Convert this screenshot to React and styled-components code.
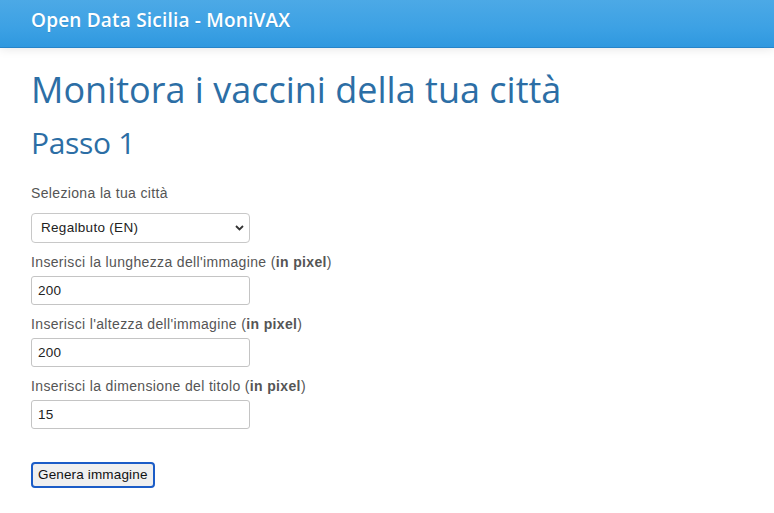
import React from 'react';
import styled, {createGlobalStyle} from 'styled-components';

const GlobalStyle = createGlobalStyle`
    html, body {
        margin: 0;
        padding: 0;
        background: #fff;
    }
    body {
        font-family: 'Liberation Sans', Arial, sans-serif;
        font-size: 14px;
        line-height: 20px;
        letter-spacing: 0.35px;
        color: #555;
    }
`

const Navbar = styled.header`
    height: 47px;
    background-image: linear-gradient(#4ca9e6, #3ca1e4 60%, #2f98df);
    border-bottom: 1px solid #2684c9;
    box-shadow: 0 1px 10px rgba(0,0,0,0.1);
    display: flex;
    align-items: center;
    padding: 0 31px;
`
const Brand = styled.span`
    font-family: 'Open Sans', sans-serif;
    font-size: 19px;
    font-weight: 600;
    letter-spacing: 0.2px;
    color: #fff;
    text-shadow: 0 1px 0 rgba(0,0,0,0.1);
    margin-top: -8px;
`

const Container = styled.main`
    padding: 0 31px;
`

const Title = styled.h1`
    font-family: 'Open Sans', sans-serif;
    font-weight: 400;
    font-size: 36px;
    line-height: 39.6px;
    letter-spacing: 0;
    color: #2c6ea5;
    margin: 22px 0 16px;
`
const Step = styled.h2`
    font-family: 'Open Sans', sans-serif;
    font-weight: 400;
    font-size: 30px;
    line-height: 33px;
    letter-spacing: -0.3px;
    color: #2c6ea5;
    margin: 0 0 24px;
`

const Intro = styled.p`
    margin: 0 0 10px;
`

const Label = styled.label`
    display: block;
    margin-bottom: 4px;
`

const SelectWrap = styled.div`
    position: relative;
    width: 219px;
    margin-bottom: 9px;
`
const Select = styled.select`
    appearance: none;
    width: 100%;
    height: 30px;
    box-sizing: border-box;
    border: 1px solid #c8c8c8;
    border-radius: 4px;
    background: #fff;
    padding: 0 9px;
    font-family: 'Liberation Sans', Arial, sans-serif;
    font-size: 13.5px;
    letter-spacing: 0.3px;
    color: #222;
`
const Chevron = styled.svg`
    position: absolute;
    right: 6px;
    top: 12px;
    pointer-events: none;
`

const Input = styled.input`
    display: block;
    width: 219px;
    height: 29px;
    box-sizing: border-box;
    border: 1px solid #c4c4c4;
    border-radius: 3px;
    padding: 0 6px;
    margin-bottom: 9px;
    font-family: 'Liberation Sans', Arial, sans-serif;
    font-size: 13.5px;
    letter-spacing: 0.3px;
    color: #222;
`

const Button = styled.button`
    margin-top: 24px;
    height: 26px;
    padding: 0 5px;
    border: 2px solid #1b5cc7;
    border-radius: 4px;
    background: #efefef;
    font-family: 'Liberation Sans', Arial, sans-serif;
    font-size: 13.5px;
    letter-spacing: 0.15px;
    color: #111;
`

const fields = [
    {id: 'width', text: "Inserisci la lunghezza dell'immagine", value: '200'},
    {id: 'height', text: "Inserisci l'altezza dell'immagine", value: '200'},
    {id: 'title', text: 'Inserisci la dimensione del titolo', value: '15'},
]

const App = () => {
    return <>
        <GlobalStyle/>
        <Navbar>
            <Brand>Open Data Sicilia - MoniVAX</Brand>
        </Navbar>
        <Container>
            <Title>Monitora i vaccini della tua città</Title>
            <Step>Passo 1</Step>
            <Intro>Seleziona la tua città</Intro>
            <SelectWrap>
                <Select defaultValue='regalbuto'>
                    <option value='regalbuto'>Regalbuto (EN)</option>
                </Select>
                <Chevron width='9' height='6' viewBox='0 0 9 6'>
                    <path d='M1 1l3.5 3.5L8 1' fill='none' stroke='#333' strokeWidth='1.8'/>
                </Chevron>
            </SelectWrap>
            {fields.map(field => (
                <div key={field.id}>
                    <Label htmlFor={field.id}>{field.text} (<b>in pixel</b>)</Label>
                    <Input id={field.id} type='text' defaultValue={field.value}/>
                </div>
            ))}
            <Button>Genera immagine</Button>
        </Container>
    </>
}

export default App;
